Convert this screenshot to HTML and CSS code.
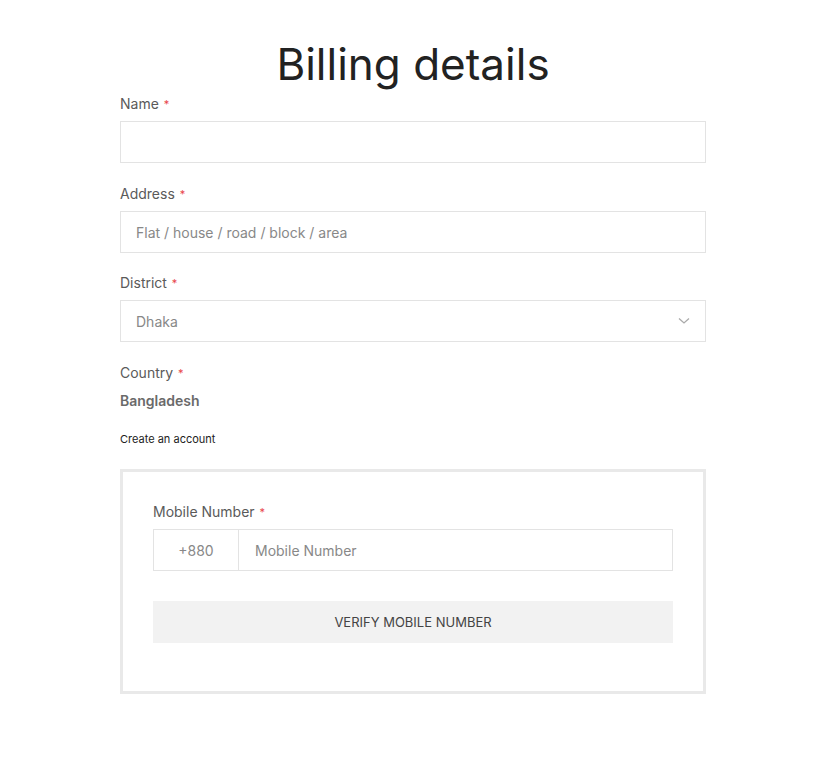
FILE: index.html
```html
<html>
<head>
    <link rel="stylesheet" href="styles.css">
</head>
<body>
    <div class="checkout">
        <h1 class="title">Billing details</h1>

        <div class="field">
            <label>Name <span class="req">*</span></label>
            <input type="text" class="input">
        </div>

        <div class="field">
            <label>Address <span class="req">*</span></label>
            <input type="text" class="input" placeholder="Flat / house / road / block / area">
        </div>

        <div class="field">
            <label>District <span class="req">*</span></label>
            <div class="select">
                <span>Dhaka</span>
                <svg width="12" height="8" viewBox="0 0 12 8"><path d="M1 1.5 L6 6 L11 1.5" fill="none" stroke="#aaa" stroke-width="1.3"/></svg>
            </div>
        </div>

        <div class="field">
            <label>Country <span class="req">*</span></label>
            <div class="country">Bangladesh</div>
        </div>

        <div class="create">Create an account</div>

        <div class="verify-box">
            <label>Mobile Number <span class="req">*</span></label>
            <div class="phone">
                <div class="prefix">+880</div>
                <input type="text" class="phone-input" placeholder="Mobile Number">
            </div>
            <button class="verify-btn">VERIFY MOBILE NUMBER</button>
        </div>
    </div>
</body>
</html>
```

FILE: styles.css
```css
body {
    margin: 0;
    background: #fff;
    font-family: Inter, "Liberation Sans", sans-serif;
    color: #555;
}
.checkout {
    width: 586px;
    margin-left: 120px;
    padding-top: 38px;
}
.title {
    margin: 0 0 4px 0;
    text-align: center;
    font-size: 44px;
    font-weight: 400;
    line-height: 52px;
    color: #222;
}
.field {
    margin-bottom: 21px;
}
.field:nth-child(3) {
    margin-bottom: 20px;
}
label {
    display: block;
    font-size: 14px;
    line-height: 20px;
    margin-bottom: 7px;
    color: #5a5a5a;
}
.req {
    color: #e8454a;
    font-size: 11px;
    vertical-align: top;
    margin-left: 1px;
}
.input {
    display: block;
    box-sizing: border-box;
    width: 100%;
    height: 42px;
    border: 1px solid #e3e3e3;
    padding: 0 15px;
    font-family: inherit;
    font-size: 14px;
    color: #555;
    outline: none;
}
.input::placeholder, .phone-input::placeholder {
    color: #888;
}
.select {
    box-sizing: border-box;
    height: 42px;
    border: 1px solid #e3e3e3;
    padding: 0 15px;
    display: flex;
    align-items: center;
    justify-content: space-between;
    font-size: 14px;
    color: #888;
}
.country {
    font-size: 14px;
    font-weight: 600;
    color: #6a6a6a;
    line-height: 20px;
    margin-top: 8px;
}
.create {
    font-size: 11px;
    color: #222;
    margin: 0 0 23px 0;
}
.verify-box {
    border: 3px solid #e9e9e9;
    padding: 30px 30px 48px 30px;
}
.verify-box label {
    margin-bottom: 7px;
}
.phone {
    display: flex;
    height: 42px;
    border: 1px solid #e3e3e3;
    box-sizing: border-box;
    margin-bottom: 30px;
}
.prefix {
    width: 84px;
    border-right: 1px solid #e3e3e3;
    display: flex;
    align-items: center;
    justify-content: center;
    font-size: 14px;
    color: #888;
}
.phone-input {
    flex: 1;
    border: none;
    padding: 0 16px;
    font-family: inherit;
    font-size: 14px;
    outline: none;
}
.verify-btn {
    display: block;
    width: 100%;
    height: 42px;
    border: none;
    background: #f2f2f2;
    font-family: inherit;
    font-size: 13px;
    color: #444;
}
```
